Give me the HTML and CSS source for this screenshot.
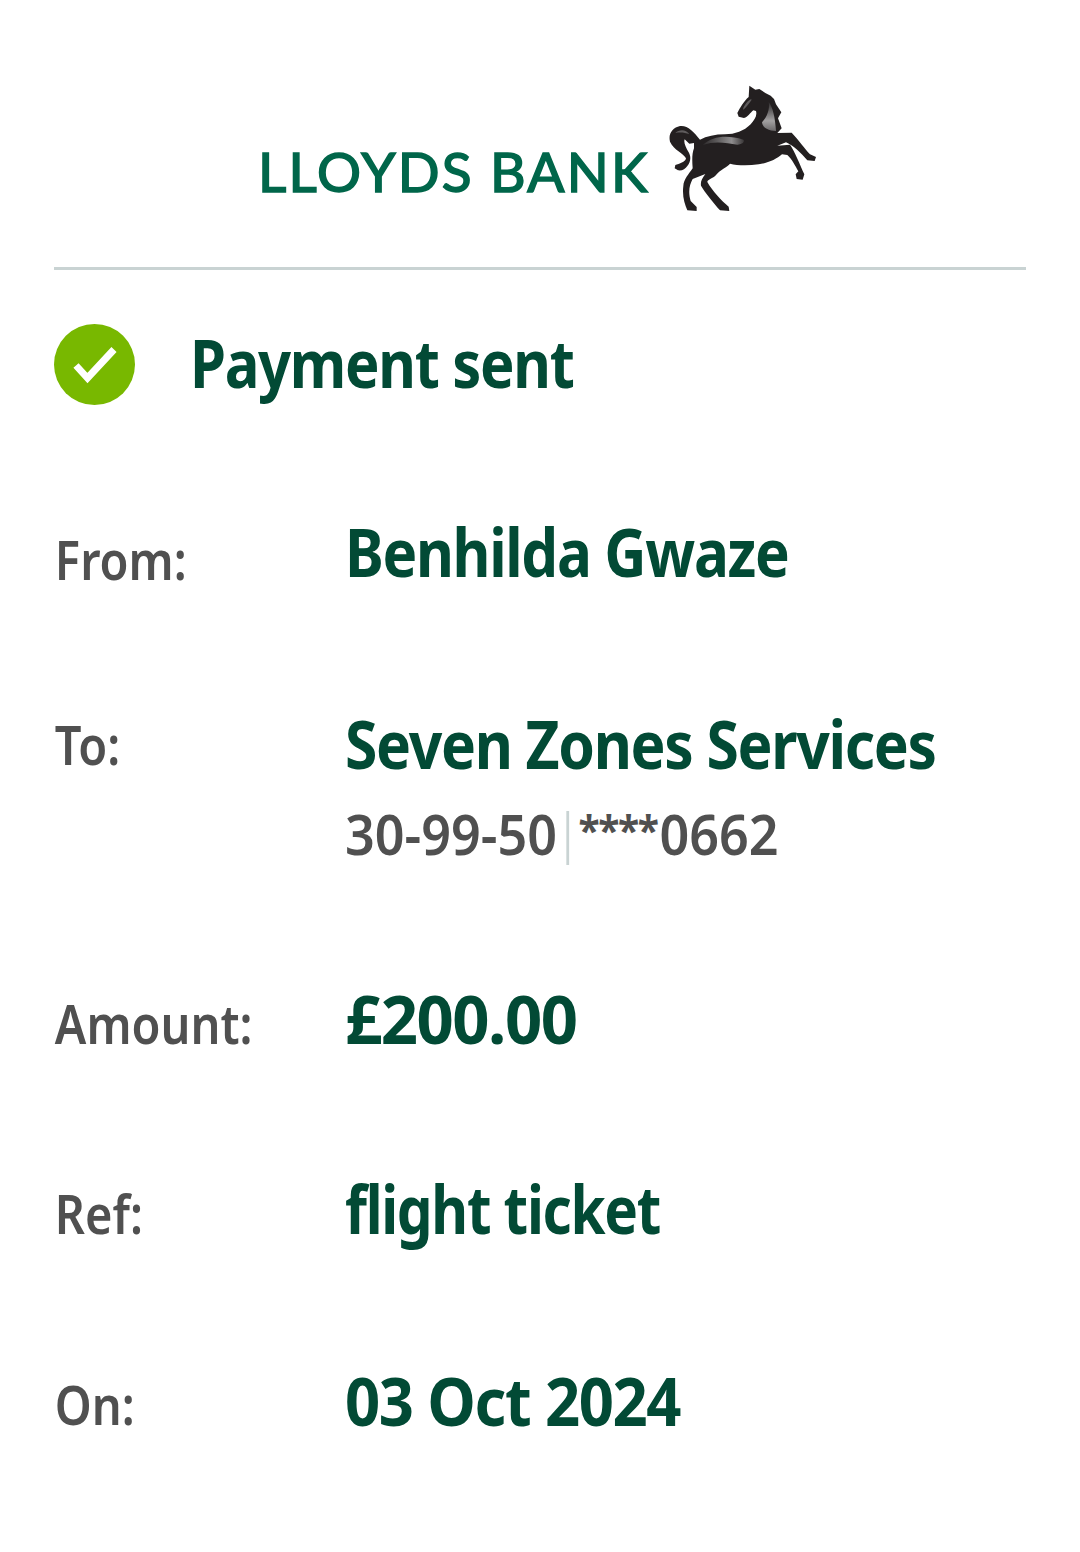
FILE: index.html
```html
<!DOCTYPE html>
<html lang="en">
<head>
<meta charset="utf-8">
<title>Payment sent</title>
<link rel="stylesheet" href="styles.css">
</head>
<body>
<main class="receipt">
  <header class="brand">
    <span class="wordmark">LLOYDS BANK</span>
    <svg class="horse" viewBox="0 0 540 450" aria-hidden="true">
      <defs>
        <linearGradient id="sheen" x1="0" y1="0" x2="1" y2="0">
          <stop offset="0" stop-color="#2b2829"/>
          <stop offset="0.7" stop-color="#8f8d8e"/>
          <stop offset="1" stop-color="#3a3738"/>
        </linearGradient>
        <linearGradient id="neck" x1="0" y1="0" x2="0" y2="1">
          <stop offset="0" stop-color="#2b2829"/>
          <stop offset="0.65" stop-color="#a3a1a2"/>
          <stop offset="1" stop-color="#6b686a"/>
        </linearGradient>
      </defs>
      <path fill="#231f20" d="M262 126 C270 110 282 90 296 78 L298 44 L316 56 L328 54 L346 66 L362 74 L372 84 L378 100 L394 124 L384 142 L395 172 L382 186 L425 185 C445 205 465 235 480 250 L498 258 L494 270 L472 268 C452 246 432 224 408 214 L382 224 L420 221 C434 240 450 282 463 310 L458 326 L440 324 L437 310 L445 301 C436 285 426 264 412 252 L396 250 C380 264 356 276 326 280 C296 284 262 284 240 278 C232 288 210 296 196 314 C184 324 172 326 172 333 C187 360 215 390 236 407 L238 420 L210 418 C190 395 165 365 153 344 C151 332 156 322 166 309 L128 324 C118 342 114 362 122 390 L140 408 L140 420 L112 418 C104 400 96 375 100 345 C101 325 116 310 128 292 C126 265 126 248 132 232 L132 216 L118 218 L104 205 C100 214 108 230 116 244 C124 258 122 272 112 285 C106 294 96 300 84 298 L74 292 L76 282 C88 278 106 274 108 262 C100 246 72 238 60 212 C54 188 68 170 90 165 C112 162 130 180 150 206 C170 196 195 190 225 190 C255 190 282 180 302 160 C314 146 322 135 318 120 L310 118 C300 126 294 138 282 141 L266 137 Z"/>
      <path fill="url(#neck)" d="M356 92 C368 108 376 140 378 180 C358 180 338 172 336 154 C352 136 360 114 356 92 Z"/>
      <path fill="url(#sheen)" d="M158 222 C190 194 232 192 280 206 C286 212 276 220 262 221 C230 216 195 208 158 222 Z"/>
      <path fill="#5f5c5d" d="M292 92 C300 84 306 82 304 88 C298 96 290 108 280 116 C278 110 286 100 292 92 Z"/>
      <path fill="#5f5c5d" d="M76 186 C88 174 108 174 118 190 C104 184 90 184 76 186 Z"/>
    </svg>
  </header>
  <hr class="rule">
  <section class="status">
    <svg class="tick" viewBox="0 0 81 81" aria-hidden="true">
      <circle cx="40.500" cy="40.500" r="40.500" fill="#78b800"/>
      <path d="M22 41.500 L33.500 54 L60 25.500" fill="none" stroke="#fff" stroke-width="7"/>
    </svg>
    <h1 class="status-title">Payment sent</h1>
  </section>
  <dl class="details">
    <div class="row row-from">
      <dt class="label">From:</dt>
      <dd class="value"><span class="strong">Benhilda Gwaze</span></dd>
    </div>
    <div class="row row-to">
      <dt class="label">To:</dt>
      <dd class="value">
        <span class="strong">Seven Zones Services</span>
        <span class="account"><span class="sort">30-99-50</span><span class="acct"><span class="mask">****</span>0662</span></span>
      </dd>
    </div>
    <div class="row row-amount">
      <dt class="label">Amount:</dt>
      <dd class="value"><span class="strong">£200.00</span></dd>
    </div>
    <div class="row row-ref">
      <dt class="label">Ref:</dt>
      <dd class="value"><span class="strong">flight ticket</span></dd>
    </div>
    <div class="row row-on">
      <dt class="label">On:</dt>
      <dd class="value"><span class="strong">03 Oct 2024</span></dd>
    </div>
  </dl>
</main>
</body>
</html>
```
FILE: styles.css
```css
* { box-sizing: border-box; }
html, body { margin: 0; padding: 0; background: #fff; }
body { font-family: "Noto Sans", "Open Sans", sans-serif; }
.receipt { width: 1080px; height: 1552px; padding: 84px 54px 0; overflow: hidden; }
.brand { display: flex; align-items: flex-end; height: 129px; padding-left: 204px; }
.wordmark { font-family: Lato, sans-serif; font-size: 55px; line-height: 66px; font-weight: 400; color: #00664a; -webkit-text-stroke: 1.6px #00664a; letter-spacing: 2.2px; width: 410px; white-space: nowrap; margin-bottom: 9px; }
.horse { width: 180px; height: 150px; flex: none; margin: 0 0 -8px -18px; }
.rule { height: 3px; margin: 54px 0 0; border: 0; background: #c9d3d3; }
.status { display: flex; align-items: center; gap: 55px; margin-top: 54px; height: 81px; }
.tick { width: 81px; height: 81px; flex: none; }
.status-title { margin: 0 0 4px; font-size: 66px; line-height: 81px; font-weight: 700; color: #024a35; letter-spacing: -1.5px; white-space: nowrap; transform: scaleX(0.878); transform-origin: left center; }
.details { margin: 0; padding-top: 108px; }
.row { display: grid; grid-template-columns: 291px 1fr; align-items: start; }
.label { font-size: 54px; line-height: 60px; font-weight: 600; color: #505050; padding: 13px 0 0 1px; transform: scaleX(0.87); transform-origin: left center; }
.value { margin: 0; }
.strong { display: block; font-size: 66px; line-height: 76px; font-weight: 700; color: #024a35; letter-spacing: -1.5px; white-space: nowrap; transform-origin: left center; }
.account { display: flex; margin-top: 30px; font-size: 56px; line-height: 44px; font-weight: 600; color: #505050; transform: scaleX(0.93); transform-origin: left center; }
.sort { padding: 0 10px 10px 0; border-right: 3px solid #c9d3d3; }
.acct { padding-left: 10px; }
.mask { font-size: 42px; line-height: 0; font-weight: 700; letter-spacing: -1.5px; vertical-align: 10px; margin-right: 2px; }
.row-from .label { padding-top: 16px; }
.row-from .strong { transform: scaleX(0.884); }
.row-to { margin-top: 116px; }
.row-to .label { padding-top: 9px; }
.row-to .strong { transform: scaleX(0.891); }
.row-amount { margin-top: 115px; }
.row-amount .strong { transform: scaleX(0.987); }
.row-ref { margin-top: 114px; }
.row-ref .strong { transform: scaleX(0.858); }
.row-on { margin-top: 116px; }
.row-on .label { padding-top: 12px; }
.row-on .strong { transform: scaleX(0.933); }
```
